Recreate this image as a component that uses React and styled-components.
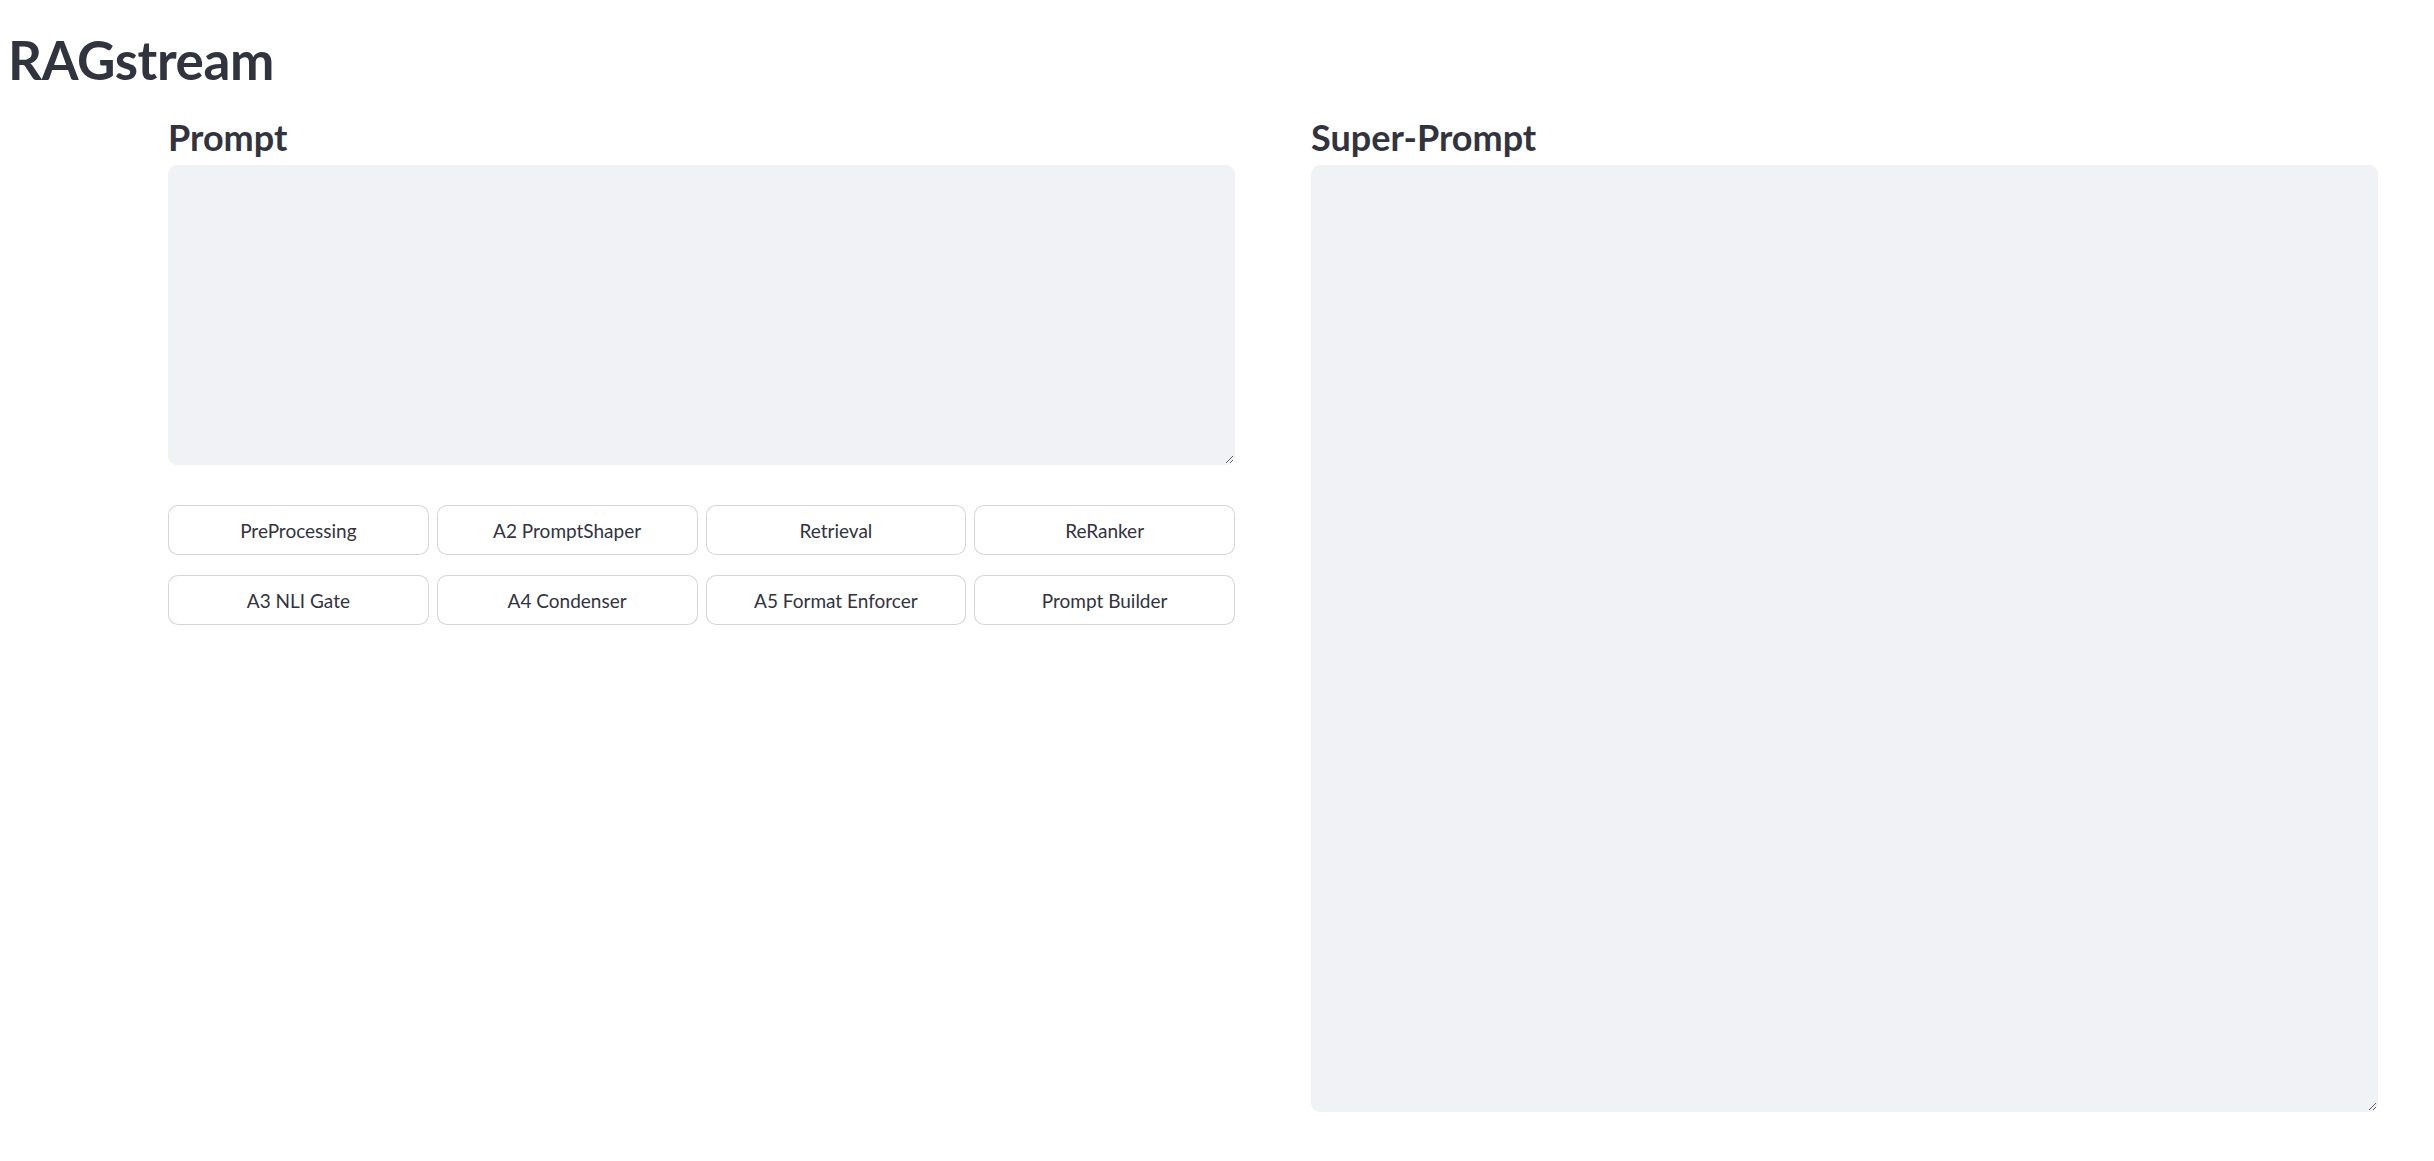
import styled, { createGlobalStyle } from 'styled-components';

const GlobalStyle = createGlobalStyle`
	body {
		margin: 0;
		background: #ffffff;
		font-family: Lato, "Noto Sans", sans-serif;
		color: #31333f;
	}
`

const Page = styled.div`
	padding: 24px 56px 0 8px;
`

const Title = styled.h1`
	margin: 0;
	font-size: 53px;
	font-weight: 700;
	line-height: 72px;
	letter-spacing: -0.4px;
	color: #31333f;
`

const Columns = styled.div`
	display: grid;
	grid-template-columns: 1fr 1fr;
	gap: 76px;
	margin-left: 160px;
	margin-top: 22px;
`

const Column = styled.div`
	display: flex;
	flex-direction: column;
`

const Heading = styled.h3`
	margin: 0;
	font-size: 36px;
	font-weight: 700;
	line-height: 38px;
	color: #31333f;
`

const TextArea = styled.textarea`
	box-sizing: border-box;
	display: block;
	width: 100%;
	height: ${props => props.h}px;
	margin-top: 9px;
	padding: 12px 14px;
	background: #f0f2f6;
	border: 1px solid #f0f2f6;
	border-radius: 9px;
	resize: vertical;
	outline: none;
	font-family: inherit;
	font-size: 21px;
	color: #31333f;
`

const ButtonGrid = styled.div`
	display: grid;
	grid-template-columns: repeat(4, 1fr);
	gap: 20px 8px;
	margin-top: 40px;
`

const Button = styled.button`
	box-sizing: border-box;
	height: 50px;
	background: #ffffff;
	border: 1px solid rgba(49, 51, 63, 0.2);
	border-radius: 10px;
	font-family: Lato, "Noto Sans", sans-serif;
	font-size: 19px;
	color: #31333f;
	cursor: pointer;
`

const steps = [
	'PreProcessing', 'A2 PromptShaper', 'Retrieval', 'ReRanker',
	'A3 NLI Gate', 'A4 Condenser', 'A5 Format Enforcer', 'Prompt Builder',
]

function App() {
	return (
		<Page>
			<GlobalStyle />
			<Title>RAGstream</Title>
			<Columns>
				<Column>
					<Heading>Prompt</Heading>
					<TextArea h={300} />
					<ButtonGrid>
						{steps.map((s) => <Button key={s}>{s}</Button>)}
					</ButtonGrid>
				</Column>
				<Column>
					<Heading>Super-Prompt</Heading>
					<TextArea h={947} />
				</Column>
			</Columns>
		</Page>
	)
}

export default App;
